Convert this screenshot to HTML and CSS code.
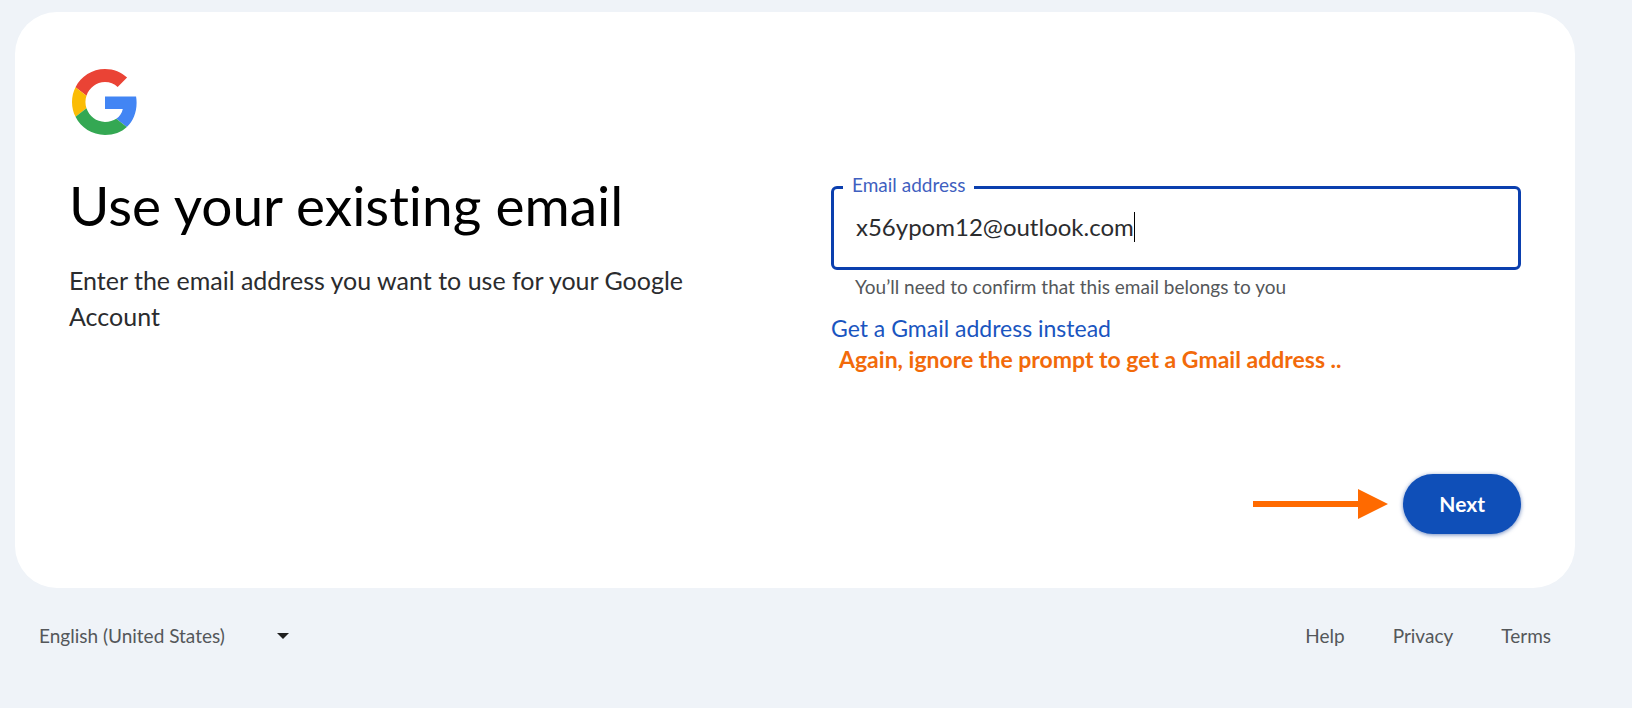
FILE: index.html
```html
<!DOCTYPE html>
<html lang="en">
<head>
  <meta charset="UTF-8">
  <meta name="viewport" content="width=device-width, initial-scale=1.0">
  <title>Use your existing email</title>
  <link rel="stylesheet" href="styles.css">
</head>
<body>

  <main class="card">
    <svg class="logo" viewBox="0 0 48 48" role="img" aria-label="Google">
      <path fill="#ea4335" d="M24 9.5c3.54 0 6.71 1.22 9.21 3.6l6.85-6.85C35.9 2.38 30.47 0 24 0 14.62 0 6.51 5.38 2.56 13.22l7.98 6.19C12.43 13.72 17.74 9.5 24 9.5z"/>
      <path fill="#4285f4" d="M46.98 24.55c0-1.57-.15-3.09-.38-4.55H24v9.02h12.94c-.58 2.96-2.26 5.48-4.78 7.18l7.73 6c4.51-4.18 7.09-10.36 7.09-17.65z"/>
      <path fill="#fbbc05" d="M10.53 28.59c-.48-1.45-.76-2.99-.76-4.59s.27-3.14.76-4.59l-7.98-6.19C.92 16.46 0 20.12 0 24c0 3.88.92 7.54 2.56 10.78l7.97-6.19z"/>
      <path fill="#34a853" d="M24 48c6.48 0 11.93-2.13 15.89-5.81l-7.73-6c-2.15 1.45-4.92 2.3-8.16 2.3-6.26 0-11.57-4.22-13.47-9.91l-7.98 6.19C6.51 42.62 14.62 48 24 48z"/>
    </svg>

    <div class="columns">
      <div class="intro">
        <h1>Use your existing email</h1>
        <p>Enter the email address you want to use for your Google Account</p>
      </div>

      <form class="email-form">
        <div class="field">
          <label for="email">Email address</label>
          <input type="text" id="email" value="x56ypom12@outlook.com" aria-describedby="email-help">
          <span class="caret"></span>
        </div>
        <p class="help" id="email-help">You’ll need to confirm that this email belongs to you</p>
        <a class="gmail-link" href="#">Get a Gmail address instead</a>
        <p class="note">Again, ignore the prompt to get a Gmail address ..</p>

        <div class="actions">
          <svg class="arrow" viewBox="0 0 135 30" aria-hidden="true">
            <path fill="#ff6a00" d="M0 12h105V0l30 15-30 15V18H0z"/>
          </svg>
          <button type="button" class="next-btn">Next</button>
        </div>
      </form>
    </div>
  </main>

  <footer class="footer">
    <div class="language">
      <select aria-label="Language">
        <option>English (United States)</option>
      </select>
    </div>
    <nav class="footer-links">
      <a href="#">Help</a>
      <a href="#">Privacy</a>
      <a href="#">Terms</a>
    </nav>
  </footer>

</body>
</html>
```
FILE: styles.css
```css
* {
  box-sizing: border-box;
}
body {
  margin: 0;
  padding: 12px 57px 0 15px;
  min-height: 100vh;
  font-family: Lato, "Open Sans", sans-serif;
  font-size: 19px;
  line-height: 24px;
  font-variant-ligatures: none;
  color: #1f1f1f;
  background-color: #eff3f8;
}
h1, p {
  margin: 0;
}
a {
  text-decoration: none;
}

/* Card */
.card {
  padding: 54px;
  background-color: #fff;
  border-radius: 42px;
}
.logo {
  display: block;
  width: 72px;
  height: 72px;
  padding: 3px;
}
.columns {
  display: grid;
  grid-template-columns: 1fr 1fr;
  gap: 72px;
  margin-top: 34px;
}
.intro h1 {
  font-size: 55px;
  font-weight: 400;
  line-height: 66px;
  color: #000;
}
.intro p {
  margin-top: 24px;
  padding-right: 24px;
  font-size: 25px;
  line-height: 36px;
  color: #2b2c2e;
}

/* Email form */
.email-form {
  padding-top: 14px;
}
.field {
  position: relative;
  display: flex;
  align-items: center;
  height: 84px;
  padding: 0 22px 2px;
  border: 3px solid #0b3fae;
  border-radius: 6px;
}
.field label {
  position: absolute;
  top: -16px;
  left: 9px;
  padding: 0 9px;
  color: #3f5fc0;
  background-color: #fff;
}
.field input {
  field-sizing: content;
  padding: 0;
  border: 0;
  outline: none;
  font: inherit;
  font-size: 24px;
  line-height: 36px;
  color: #2b2c2e;
}
.caret {
  width: 1px;
  height: 30px;
  background-color: #000;
}
.help {
  padding: 5px 24px 0;
  color: #54575a;
}
.gmail-link {
  display: block;
  width: fit-content;
  margin-top: 14px;
  font-size: 23px;
  line-height: 30px;
  color: #1a55c0;
}
.note {
  padding-left: 8px;
  font-size: 23px;
  font-weight: 700;
  line-height: 32px;
  color: #f26a0a;
}
.actions {
  display: flex;
  align-items: center;
  justify-content: flex-end;
  gap: 15px;
  margin-top: 99px;
}
.arrow {
  width: 135px;
  height: 30px;
}
.next-btn {
  height: 60px;
  padding: 0 36px;
  border: none;
  border-radius: 30px;
  font: inherit;
  font-size: 21px;
  font-weight: 700;
  color: #fff;
  background-color: #0f4fb8;
  box-shadow: 0 1px 4px rgba(15, 60, 150, 0.6);
}

/* Footer */
.footer {
  display: flex;
  align-items: center;
  justify-content: space-between;
  padding: 36px 24px;
  color: #54575a;
}
.language {
  position: relative;
  width: 250px;
}
.language select {
  appearance: none;
  width: 100%;
  padding: 0;
  border: none;
  font: inherit;
  color: inherit;
  background: none;
}
.language::after {
  content: "";
  position: absolute;
  top: 9px;
  right: 0;
  border: 6px solid transparent;
  border-top-color: #1f1f1f;
  border-bottom: none;
  pointer-events: none;
}
.footer-links {
  display: flex;
  gap: 48px;
}
.footer-links a {
  color: inherit;
}
```
